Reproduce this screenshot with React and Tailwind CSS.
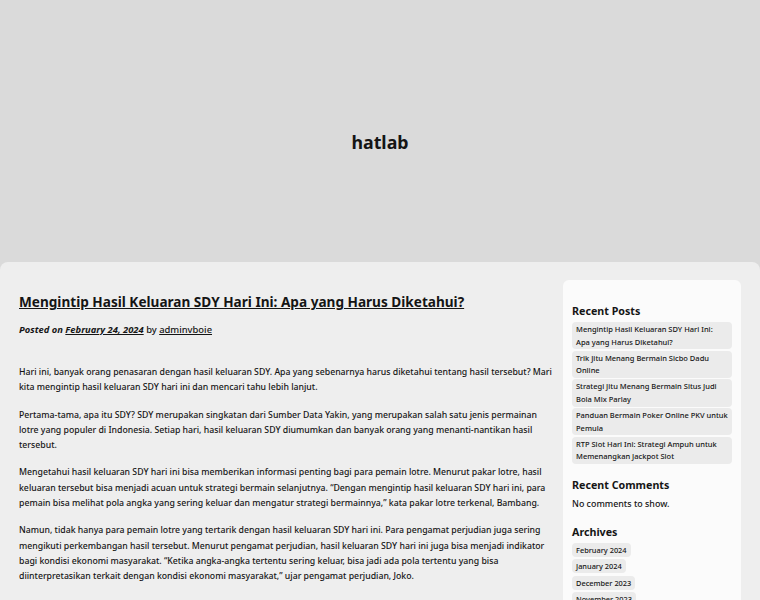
import React from "react";

const paragraphs = [
  [
    "Hari ini, banyak orang penasaran dengan hasil keluaran SDY. Apa yang sebenarnya harus diketahui tentang hasil tersebut? Mari",
    "kita mengintip hasil keluaran SDY hari ini dan mencari tahu lebih lanjut.",
  ],
  [
    "Pertama-tama, apa itu SDY? SDY merupakan singkatan dari Sumber Data Yakin, yang merupakan salah satu jenis permainan",
    "lotre yang populer di Indonesia. Setiap hari, hasil keluaran SDY diumumkan dan banyak orang yang menanti-nantikan hasil",
    "tersebut.",
  ],
  [
    "Mengetahui hasil keluaran SDY hari ini bisa memberikan informasi penting bagi para pemain lotre. Menurut pakar lotre, hasil",
    "keluaran tersebut bisa menjadi acuan untuk strategi bermain selanjutnya. “Dengan mengintip hasil keluaran SDY hari ini, para",
    "pemain bisa melihat pola angka yang sering keluar dan mengatur strategi bermainnya,” kata pakar lotre terkenal, Bambang.",
  ],
  [
    "Namun, tidak hanya para pemain lotre yang tertarik dengan hasil keluaran SDY hari ini. Para pengamat perjudian juga sering",
    "mengikuti perkembangan hasil tersebut. Menurut pengamat perjudian, hasil keluaran SDY hari ini juga bisa menjadi indikator",
    "bagi kondisi ekonomi masyarakat. “Ketika angka-angka tertentu sering keluar, bisa jadi ada pola tertentu yang bisa",
    "diinterpretasikan terkait dengan kondisi ekonomi masyarakat,” ujar pengamat perjudian, Joko.",
  ],
  [
    "Tentu saja, mengintip hasil keluaran SDY hari ini bukanlah jaminan kemenangan. Namun, informasi tersebut bisa menjadi",
    "panduan bagi para pemain lotre.",
  ],
];

const recentPosts = [
  "Mengintip Hasil Keluaran SDY Hari Ini: Apa yang Harus Diketahui?",
  "Trik Jitu Menang Bermain Sicbo Dadu Online",
  "Strategi Jitu Menang Bermain Situs Judi Bola Mix Parlay",
  "Panduan Bermain Poker Online PKV untuk Pemula",
  "RTP Slot Hari Ini: Strategi Ampuh untuk Memenangkan Jackpot Slot",
];

const archives = ["February 2024", "January 2024", "December 2023", "November 2023", "October 2023"];

export default function App() {
  return (
    <div className="min-h-screen bg-[#dadada] text-[#151515] font-['Noto_Sans',sans-serif]">
      <header className="h-[262px] flex items-center justify-center pt-[22px]">
        <h1 className="text-[17.8px] font-bold">hatlab</h1>
      </header>

      <div className="bg-[#eeeeee] rounded-t-[8px] flex gap-[12px] pl-[19px] pr-[19px] pt-[18px] min-h-[400px]">
        <main className="w-[532px] min-w-0 shrink-0 pt-[12px]">
          <h2 className="text-[13.6px] font-bold underline leading-[20px]">
            Mengintip Hasil Keluaran SDY Hari Ini: Apa yang Harus Diketahui?
          </h2>
          <div className="mt-[11px] text-[9.4px] leading-[14px] font-medium">
            <span className="font-bold italic">
              Posted on <span className="underline">February 24, 2024</span>
            </span>{" "}
            by <span className="underline">adminvboie</span>
          </div>

          <div className="mt-[28px] text-[8.72px] leading-[15.3px] font-medium flex flex-col gap-[12px]">
            {paragraphs.map((lines, i) => (
              <p key={i}>
                {lines.map((line, j) => (
                  <span key={j} className="block whitespace-nowrap">
                    {line}
                  </span>
                ))}
              </p>
            ))}
          </div>
        </main>

        <aside className="w-[178px] shrink-0 bg-[#fbfbfb] rounded-t-[6px] px-[9px] pt-[23px]">
          <h3 className="text-[10.7px] font-bold leading-[16px]">Recent Posts</h3>
          <ul className="mt-[3px] flex flex-col gap-[1.5px]">
            {recentPosts.map((p) => (
              <li key={p} className="bg-[#ebebeb] rounded-[4px] px-[4px] py-[1px] text-[7.5px] leading-[12.6px] font-medium">
                {p}
              </li>
            ))}
          </ul>

          <h3 className="mt-[13px] text-[10.7px] font-bold leading-[16px]">Recent Comments</h3>
          <p className="mt-[4px] text-[8.9px] leading-[14px] font-medium">No comments to show.</p>

          <h3 className="mt-[13px] text-[10.7px] font-bold leading-[16px]">Archives</h3>
          <ul className="mt-[3px] flex flex-col items-start gap-[2.5px]">
            {archives.map((a) => (
              <li key={a} className="bg-[#ebebeb] rounded-[4px] px-[4px] text-[7.4px] leading-[14px] font-medium">
                {a}
              </li>
            ))}
          </ul>
        </aside>
      </div>
    </div>
  );
}
